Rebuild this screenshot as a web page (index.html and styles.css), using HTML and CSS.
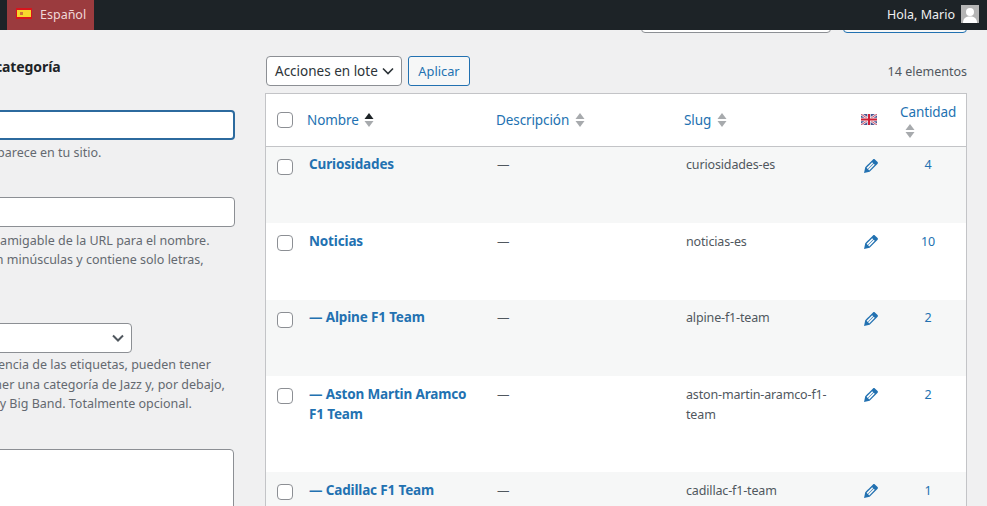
FILE: index.html
```html
<!DOCTYPE html>
<html lang="es">
<head>
    <meta charset="UTF-8">
    <title>Categorías</title>
    <link rel="stylesheet" href="styles.css">
</head>
<body>
    <div class="adminbar">
        <div class="lang-item">
            <svg class="flag-es" width="16" height="11" viewBox="0 0 16 11">
                <rect width="16" height="11" fill="#d8141c"/>
                <rect x="1" y="2" width="14" height="7" fill="#f7d62c"/>
                <rect x="4" y="4" width="3" height="3" fill="#d0703a"/>
            </svg>
            <span>Español</span>
        </div>
        <div class="account">
            <span>Hola, Mario</span>
            <svg class="avatar" width="18" height="18" viewBox="0 0 18 18">
                <rect width="18" height="18" fill="#b4b4b4"/>
                <circle cx="9" cy="7" r="4" fill="#fff"/>
                <path d="M2 18c0-5 3-6.500 7-6.500s7 1.500 7 6.500z" fill="#fff"/>
            </svg>
        </div>
    </div>

    <div class="search-strip">
        <div class="search-input"></div>
        <div class="search-button"></div>
    </div>

    <div class="columns">
        <div class="col-form">
            <h2>Añadir una nueva categoría</h2>
            <input class="field field-focus" type="text">
            <p class="help">Su nombre es como aparece en tu sitio.</p>
            <input class="field field-slug" type="text">
            <p class="help help-slug">El «slug» es la versión amigable de la URL para el nombre.<br>Habitualmente está en minúsculas y contiene solo letras,<br>números y guiones.</p>
            <div class="fake-select">
                <svg width="12" height="8" viewBox="0 0 12 8"><path d="M1 1.500l5 5 5-5" fill="none" stroke="#50575e" stroke-width="2"/></svg>
            </div>
            <p class="help help-parent">Las categorías, a diferencia de las etiquetas, pueden tener<br>jerarquías. Podrías tener una categoría de Jazz y, por debajo,<br>categoría para Bebop y Big Band. Totalmente opcional.</p>
            <div class="fake-textarea"></div>
        </div>

        <div class="col-list">
            <div class="tablenav">
                <div class="bulk-select">
                    <span>Acciones en lote</span>
                    <svg width="12" height="8" viewBox="0 0 12 8"><path d="M1 1.500l5 5 5-5" fill="none" stroke="#2c3338" stroke-width="1.600"/></svg>
                </div>
                <button class="apply" type="button">Aplicar</button>
                <span class="count">14 elementos</span>
            </div>

            <table class="terms">
                <colgroup>
                    <col class="c-check"><col class="c-name"><col class="c-desc"><col class="c-slug"><col class="c-flag"><col class="c-num">
                </colgroup>
                <thead>
                    <tr>
                        <th><span class="check"></span></th>
                        <th class="name-head"><a>Nombre</a> <svg class="sort" width="10" height="14" viewBox="0 0 10 14"><path d="M5 0l4.500 6h-9z" fill="#1d2327"/><path d="M5 14l4.500-6h-9z" fill="#a7aaad"/></svg></th>
                        <th><a>Descripción</a> <svg class="sort" width="10" height="14" viewBox="0 0 10 14"><path d="M5 0l4.500 6h-9z" fill="#a7aaad"/><path d="M5 14l4.500-6h-9z" fill="#a7aaad"/></svg></th>
                        <th><a>Slug</a> <svg class="sort" width="10" height="14" viewBox="0 0 10 14"><path d="M5 0l4.500 6h-9z" fill="#a7aaad"/><path d="M5 14l4.500-6h-9z" fill="#a7aaad"/></svg></th>
                        <th class="flag-head">
                            <svg width="16" height="11" viewBox="0 0 16 11">
                                <rect width="16" height="11" fill="#4a5590"/>
                                <path d="M0 0l16 11M16 0L0 11" stroke="#e8e8f0" stroke-width="2.400"/>
                                <path d="M0 0l16 11M16 0L0 11" stroke="#c8102e" stroke-width=".7"/>
                                <path d="M8 0v11M0 5.500h16" stroke="#f4eeee" stroke-width="3.500"/>
                                <path d="M8 0v11M0 5.500h16" stroke="#d02038" stroke-width="2"/>
                            </svg>
                        </th>
                        <th class="num-head"><a>Cantidad</a><svg class="sort sort-below" width="10" height="14" viewBox="0 0 10 14"><path d="M5 0l4.500 6h-9z" fill="#a7aaad"/><path d="M5 14l4.500-6h-9z" fill="#a7aaad"/></svg></th>
                    </tr>
                </thead>
                <tbody>
                    <tr class="alt">
                        <td><span class="check"></span></td>
                        <td class="name"><a>Curiosidades</a></td>
                        <td class="desc">—</td>
                        <td class="slug">curiosidades-es</td>
                        <td class="edit"><svg width="20" height="20" viewBox="0 0 20 20"><path d="M13.890 3.390l2.710 2.720c.46.46.42 1.240.03 1.640l-8.010 8.020-5.560 1.160 1.160-5.580s7.600-7.630 7.990-8.030c.39-.39 1.220-.39 1.680.07zm-2.730 2.790l-5.590 5.610 1.110 1.110 5.540-5.650zm-2.970 8.230l5.580-5.600-1.070-1.080-5.590 5.600z"/></svg></td>
                        <td class="num">4</td>
                    </tr>
                    <tr class="low tall">
                        <td><span class="check"></span></td>
                        <td class="name"><a>Noticias</a></td>
                        <td class="desc">—</td>
                        <td class="slug">noticias-es</td>
                        <td class="edit"><svg width="20" height="20" viewBox="0 0 20 20"><path d="M13.890 3.390l2.710 2.720c.46.46.42 1.240.03 1.640l-8.010 8.020-5.560 1.160 1.160-5.580s7.600-7.630 7.990-8.030c.39-.39 1.220-.39 1.680.07zm-2.730 2.790l-5.590 5.610 1.110 1.110 5.540-5.650zm-2.970 8.230l5.580-5.600-1.070-1.080-5.590 5.600z"/></svg></td>
                        <td class="num">10</td>
                    </tr>
                    <tr class="alt">
                        <td><span class="check"></span></td>
                        <td class="name"><a>— Alpine F1 Team</a></td>
                        <td class="desc">—</td>
                        <td class="slug">alpine-f1-team</td>
                        <td class="edit"><svg width="20" height="20" viewBox="0 0 20 20"><path d="M13.890 3.390l2.710 2.720c.46.46.42 1.240.03 1.640l-8.010 8.020-5.560 1.160 1.160-5.580s7.600-7.630 7.990-8.030c.39-.39 1.220-.39 1.680.07zm-2.730 2.790l-5.590 5.610 1.110 1.110 5.540-5.650zm-2.970 8.230l5.580-5.600-1.070-1.080-5.590 5.600z"/></svg></td>
                        <td class="num">2</td>
                    </tr>
                    <tr class="low">
                        <td><span class="check"></span></td>
                        <td class="name"><a>— Aston Martin Aramco<br>F1 Team</a></td>
                        <td class="desc">—</td>
                        <td class="slug">aston-martin-aramco-f1-<br>team</td>
                        <td class="edit"><svg width="20" height="20" viewBox="0 0 20 20"><path d="M13.890 3.390l2.710 2.720c.46.46.42 1.240.03 1.640l-8.010 8.020-5.560 1.160 1.160-5.580s7.600-7.630 7.990-8.030c.39-.39 1.220-.39 1.680.07zm-2.730 2.790l-5.590 5.610 1.110 1.110 5.540-5.650zm-2.970 8.230l5.580-5.600-1.070-1.080-5.590 5.600z"/></svg></td>
                        <td class="num">2</td>
                    </tr>
                    <tr class="alt low">
                        <td><span class="check"></span></td>
                        <td class="name"><a>— Cadillac F1 Team</a></td>
                        <td class="desc">—</td>
                        <td class="slug">cadillac-f1-team</td>
                        <td class="edit"><svg width="20" height="20" viewBox="0 0 20 20"><path d="M13.890 3.390l2.710 2.720c.46.46.42 1.240.03 1.640l-8.010 8.020-5.560 1.160 1.160-5.580s7.600-7.630 7.990-8.030c.39-.39 1.220-.39 1.680.07zm-2.730 2.790l-5.590 5.610 1.110 1.110 5.540-5.650zm-2.970 8.230l5.580-5.600-1.070-1.080-5.590 5.600z"/></svg></td>
                        <td class="num">1</td>
                    </tr>
                </tbody>
            </table>
        </div>
    </div>
</body>
</html>
```

FILE: styles.css
```css
html, body {
    height: 100%;
    overflow: hidden;
}
body {
    margin: 0;
    background-color: #f0f0f1;
    color: #3c434a;
    font-family: "Noto Sans", "Open Sans", sans-serif;
    font-size: 12.500px;
}

/* top bar */
.adminbar {
    height: 30px;
    background-color: #1d2327;
    color: #f0f0f1;
    display: flex;
    justify-content: space-between;
    line-height: 30px;
}
.lang-item {
    margin-left: 7px;
    width: 87px;
    padding-left: 9px;
    box-sizing: border-box;
    background-color: #9b3b3e;
    color: #f0d8d8;
    display: flex;
    align-items: center;
    gap: 8px;
}
.flag-es {
    margin-bottom: 3px;
}
.account {
    display: flex;
    align-items: center;
    gap: 6px;
    margin-right: 8px;
}
.avatar {
    margin-bottom: 2px;
}

/* only the bottom of the search box shows under the bar */
.search-strip {
    height: 3px;
    overflow: hidden;
    display: flex;
    justify-content: flex-end;
    align-items: flex-end;
    gap: 12px;
    padding-right: 20px;
}
.search-input, .search-button {
    height: 30px;
    flex: none;
    box-sizing: border-box;
    border-radius: 4px;
}
.search-input {
    width: 190px;
    background-color: #fff;
    border: 1px solid #8c8f94;
}
.search-button {
    width: 124px;
    background-color: #f6f7f7;
    border: 1px solid #2271b1;
}

.columns {
    display: flex;
    margin-left: -130px;
}

/* left form */
.col-form {
    width: 365px;
    flex: none;
    margin-right: 30px;
}
.col-form h2 {
    margin: 25px 0 0;
    font-size: 14px;
    line-height: 18px;
    font-weight: 700;
    letter-spacing: -0.100px;
    color: #1d2327;
}
.field {
    display: block;
    width: 100%;
    height: 30px;
    box-sizing: border-box;
    margin: 0;
    background-color: #fff;
    border: 1px solid #8c8f94;
    border-radius: 4px;
}
.field-focus {
    margin-top: 34px;
    border: 2px solid #2c6a9e;
}
.field-slug {
    margin-top: 34px;
}
.help {
    margin: 3px 0 0;
    font-size: 12.500px;
    line-height: 19.500px;
    color: #646970;
    white-space: nowrap;
}
.help-slug {
    margin-top: 4px;
}
.help-parent {
    margin-top: 2px;
}
.fake-select {
    width: 262px;
    height: 30px;
    box-sizing: border-box;
    margin-top: 34px;
    padding-right: 7px;
    background-color: #fff;
    border: 1px solid #8c8f94;
    border-radius: 4px;
    display: flex;
    justify-content: flex-end;
    align-items: center;
}
.fake-textarea {
    width: 364px;
    height: 100px;
    box-sizing: border-box;
    margin-top: 35px;
    background-color: #fff;
    border: 1px solid #8c8f94;
    border-radius: 4px;
}

/* list column */
.col-list {
    width: 702px;
    flex: none;
}
.tablenav {
    display: flex;
    align-items: center;
    height: 30px;
    margin-top: 23px;
    margin-left: 1px;
    margin-bottom: 7px;
    gap: 6px;
}
.bulk-select {
    width: 136px;
    height: 30px;
    box-sizing: border-box;
    padding: 0 7px 0 8px;
    background-color: #fff;
    border: 1px solid #8c8f94;
    border-radius: 4px;
    display: flex;
    justify-content: space-between;
    align-items: center;
    font-size: 13.500px;
    color: #2c3338;
}
.apply {
    width: 62px;
    height: 30px;
    padding: 0;
    background-color: #f6f7f7;
    border: 1px solid #2271b1;
    border-radius: 3px;
    font-family: inherit;
    font-size: 12.800px;
    color: #2271b1;
}
.count {
    margin-left: auto;
    color: #50575e;
}

/* table */
.terms {
    width: 702px;
    table-layout: fixed;
    border-collapse: separate;
    border-spacing: 0;
    background-color: #fff;
    border: 1px solid #c3c4c7;
}
.c-check { width: 33px; }
.c-name { width: 187px; }
.c-desc { width: 188px; }
.c-slug { width: 176px; }
.c-flag { width: 38px; }
.terms th {
    height: 53px;
    box-sizing: border-box;
    padding: 0 10px;
    border-bottom: 1px solid #c3c4c7;
    text-align: left;
    font-weight: 400;
    font-size: 13.500px;
    letter-spacing: -0.100px;
    color: #2271b1;
}
.terms th:first-child, .terms td:first-child {
    padding: 0 0 0 11px;
}
.terms .name-head {
    padding-left: 8px;
}
.terms th .sort {
    vertical-align: -2px;
    margin-left: 2px;
}
.terms .flag-head {
    padding: 0;
    text-align: center;
}
.terms .num-head {
    padding: 0 0 0 12px;
}
.terms th .sort-below {
    display: block;
    margin: 3px 0 0 5px;
}
.check {
    display: block;
    width: 16px;
    height: 16px;
    box-sizing: border-box;
    background-color: #fff;
    border: 1px solid #8c8f94;
    border-radius: 4px;
}
.terms td {
    vertical-align: top;
    padding: 8px 0 0 11px;
    line-height: 19.500px;
    letter-spacing: -0.150px;
    color: #50575e;
}
.terms td:first-child {
    padding-top: 12px;
}
.alt td {
    background-color: #f6f7f7;
}
.terms .name {
    padding: 7px 0 49px 10px;
    font-size: 13.500px;
    line-height: 20px;
    font-weight: 700;
    color: #2271b1;
}
.low .name {
    padding-top: 8px;
    padding-bottom: 48px;
}
/* row 2 is a pixel taller, the page rows are 76.5px high */
.tall .name {
    height: 77px;
    box-sizing: border-box;
}
.terms .slug {
    padding: 8px 0 0 12px;
}
.terms .edit {
    padding: 9px 0 0 11px;
}
.edit svg {
    display: block;
    fill: #2271b1;
}
.terms .num {
    padding: 8px 0 0 2px;
    text-align: center;
    color: #2271b1;
}
.low .desc, .low .num {
    padding-top: 9px;
}
.terms .low .slug {
    padding-top: 9px;
}
```
